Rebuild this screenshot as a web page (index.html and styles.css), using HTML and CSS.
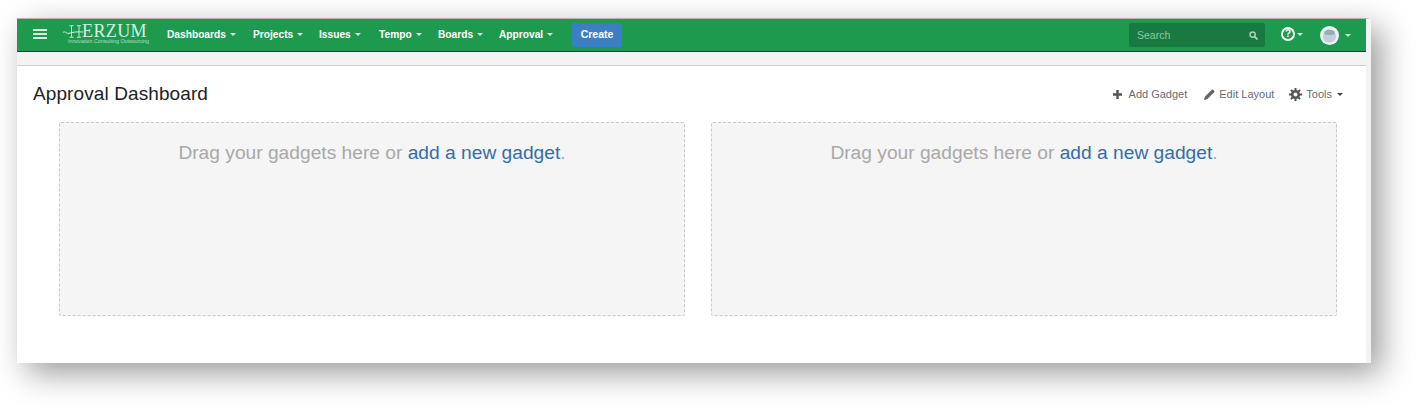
FILE: index.html
```html
<!DOCTYPE html>
<html lang="en">
<head>
<meta charset="utf-8">
<title>Approval Dashboard</title>
<link rel="stylesheet" href="styles.css">
</head>
<body>
<div class="window">
  <header class="nav">
    <svg class="burger" width="14" height="10" viewBox="0 0 14 10"><path d="M0 0h14v2H0zM0 4h14v2H0zM0 8h14v2H0z" fill="#d9eee0"/></svg>
    <div class="logo">
      <div class="logo-name"><svg class="logo-mark" width="20" height="13" viewBox="0 0 20 13"><path d="M0 7.500c2-2 3.500 1.500 6 .8 4-1.200 8-1.800 14-1.300" fill="none" stroke="#d8ecdf" stroke-width="1"/><path d="M8.500 1v11M16 1v11M6.500 .7h4M14 .7h4M6.500 12.300h4M14 12.300h4" fill="none" stroke="#d8ecdf" stroke-width=".9"/></svg><span>ERZUM</span></div>
      <div class="logo-tag">Innovation Consulting Outsourcing</div>
    </div>
    <nav class="menu">
      <a class="menu-item m1">Dashboards<i class="caret"></i></a>
      <a class="menu-item m2">Projects<i class="caret"></i></a>
      <a class="menu-item m3">Issues<i class="caret"></i></a>
      <a class="menu-item m4">Tempo<i class="caret"></i></a>
      <a class="menu-item m5">Boards<i class="caret"></i></a>
      <a class="menu-item m6">Approval<i class="caret"></i></a>
    </nav>
    <a class="create">Create</a>
    <div class="nav-right">
      <div class="search"><span>Search</span>
        <svg width="9" height="9" viewBox="0 0 9 9"><circle cx="3.600" cy="3.600" r="2.600" fill="none" stroke="#a9d3b8" stroke-width="1.500"/><path d="M5.500 5.500L8.500 8.500" stroke="#a9d3b8" stroke-width="1.800"/></svg>
      </div>
      <div class="help"><svg width="14" height="14" viewBox="0 0 14 14"><circle cx="7" cy="7" r="6" fill="none" stroke="#fff" stroke-width="1.900"/><text x="7" y="10.400" text-anchor="middle" class="help-q">?</text></svg><i class="caret"></i></div>
      <div class="user"><svg width="19" height="19" viewBox="0 0 19 19"><circle cx="9.500" cy="9.500" r="9.500" fill="#eef2f5"/><circle cx="9.500" cy="10" r="6.600" fill="#c3ced8"/><path d="M4.500 5.500c2-2.400 8-2.400 10 0v2.500c-2 1.300-8 1.300-10 0z" fill="#9aa9b6"/></svg><i class="caret"></i></div>
    </div>
  </header>
  <div class="subbar"></div>
  <main class="content">
    <div class="title-row">
      <h1>Approval Dashboard</h1>
      <div class="tools">
        <a class="tool t1"><svg width="9" height="9" viewBox="0 0 9 9"><path d="M3.300 0h2.400v3.300H9v2.400H5.700V9H3.300V5.700H0V3.300h3.300z" fill="#555"/></svg>Add Gadget</a>
        <a class="tool t2"><svg width="11" height="11" viewBox="0 0 11 11"><path d="M0 11l.8-3.200L7.800.8a1 1 0 0 1 1.400 0l1 1a1 1 0 0 1 0 1.400L3.200 10.200z" fill="#666"/></svg>Edit Layout</a>
        <a class="tool t3"><svg width="13" height="13" viewBox="0 0 13 13"><circle cx="6.500" cy="6.500" r="3.300" fill="none" stroke="#555" stroke-width="2.600"/><path d="M6.500 0v13M0 6.500h13M1.900 1.900l9.200 9.200M11.100 1.900l-9.200 9.200" stroke="#555" stroke-width="2" stroke-dasharray="2.300 8.400 2.300"/></svg>Tools<i class="caret dark"></i></a>
      </div>
    </div>
    <div class="columns">
      <section class="dropzone">Drag your gadgets here or <a>add a new gadget</a>.</section>
      <section class="dropzone">Drag your gadgets here or <a>add a new gadget</a>.</section>
    </div>
  </main>
</div>
</body>
</html>
```
FILE: styles.css
```css
* { box-sizing: border-box; }
html, body { margin: 0; height: 411px; overflow: hidden; background: #fff; }
body { padding: 18px 48px 0 17px; font-family: "Liberation Sans", Arial, sans-serif; }
.window {
  width: 1354px; height: 345px; background: #fff;
  border-top: 1px solid #b5b5b5; border-right: 5px solid #f3f3f3;
  box-shadow: 10px 10px 30px rgba(0,0,0,.4);
}
.nav {
  height: 33px; background: #1e9a4f; border-bottom: 1px solid #15403a;
  display: flex; align-items: center; padding: 0 16px 2px 16px; color: #fff;
}
.burger { flex: none; margin-right: 16px; }
.logo { width: 85px; margin-right: 19px; color: #dcefe3; }
.logo-name { display: flex; align-items: center; height: 14px; font: 18px/14px "Liberation Serif", serif; letter-spacing: .4px; }
.logo-mark { flex: none; margin-right: -1px; }
.logo-tag { font-size: 5.300px; line-height: 6px; margin-left: 5px; white-space: nowrap; color: #b7dcc4; }
.menu { display: flex; }
.menu-item { display: flex; align-items: center; font-size: 10.200px; font-weight: 700; white-space: nowrap; }
.m1 { width: 86px; } .m2 { width: 66px; } .m3 { width: 60px; } .m4 { width: 59px; } .m5 { width: 61px; } .m6 { width: 73px; }
.caret { display: inline-block; width: 0; height: 0; margin-left: 4px; border: 3px solid transparent; border-top-color: #d5ebdc; border-bottom: 0; }
.caret.dark { border-top-color: #444; margin-left: 5px; }
.create { width: 50px; height: 24px; margin-top: 2px; background: #3c7ec4; border-radius: 2px; font-size: 10.500px; font-weight: 700; text-align: center; line-height: 23px; }
.nav-right { margin-left: auto; display: flex; align-items: center; }
.search { width: 136px; height: 24px; margin: 2px 16px 0 0; background: #187a40; border-radius: 2px; padding: 0 7px 0 8px; display: flex; justify-content: space-between; align-items: center; color: #8fc7a3; font-size: 10.500px; }
.help { display: flex; align-items: center; width: 39px; }
.help svg { flex: none; }
.help .caret { margin-left: 2px; }
.help-q { font: 700 10px "Liberation Sans", sans-serif; fill: #fff; }
.user { display: flex; align-items: center; width: 30px; margin-top: 2px; }
.user svg { flex: none; }
.user .caret { margin-left: 6px; }
.subbar { height: 14px; background: #f3f3f3; border-bottom: 1px solid #cfcfcf; }
.content { padding: 0 0 0 16px; }
.title-row { height: 56px; display: flex; justify-content: space-between; align-items: center; padding-right: 23px; }
h1 { margin: 0; font-size: 19px; font-weight: 400; color: #222; letter-spacing: .1px; }
.tools { display: flex; align-items: center; color: #666c75; font-size: 11px; }
.tool { display: flex; align-items: center; white-space: nowrap; }
.t1 { margin-right: 17px; } .t1 svg { margin-right: 7px; }
.t2 { margin-right: 15px; } .t2 svg { margin-right: 4px; }
.t3 svg { margin-right: 4px; }
.columns { display: flex; gap: 26px; padding-left: 26px; }
.dropzone {
  width: 626px; height: 194px; background: #f5f5f5; border: 1px dashed #c8c8c8; border-radius: 2px;
  padding-top: 19px; text-align: center; color: #a8a8a8; font-size: 19.200px; line-height: 22px;
}
.dropzone a { color: #356da8; }
```
